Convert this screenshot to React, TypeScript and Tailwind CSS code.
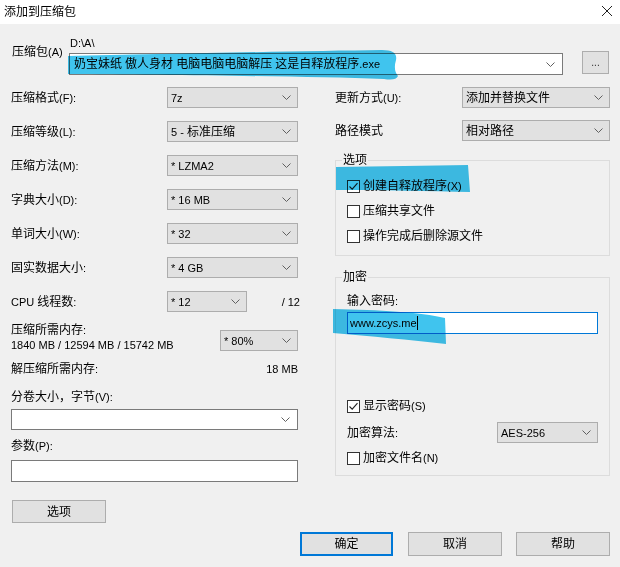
import React from "react";

const font = {
  fontFamily: '"Liberation Sans", "Noto Sans CJK SC", sans-serif',
};

// Latin runs are set a bit smaller so they keep the narrow look of the dialog font
function mix(text: string) {
  const parts = text.match(/[\u3000-\u9fff\uff00-\uffef]+|[^\u3000-\u9fff\uff00-\uffef]+/g) || [];
  return parts.map((p, i) =>
    /[\u3000-\u9fff\uff00-\uffef]/.test(p) ? (
      <span key={i}>{p}</span>
    ) : (
      <span key={i} className="text-[11px]">
        {p}
      </span>
    )
  );
}

function Chevron() {
  return (
    <svg width="9" height="5" viewBox="0 0 9 5" className="shrink-0">
      <polyline points="0.5,0.5 4.5,4.5 8.5,0.5" fill="none" stroke="#606060" strokeWidth="1" />
    </svg>
  );
}

function Select({ value, className }: { value: string; className: string }) {
  return (
    <div
      className={`flex items-center justify-between bg-[#e1e1e1] border border-[#adadad] pl-[3px] pr-[6px] ${className}`}
    >
      <span className="text-[12px] leading-[14px] text-black whitespace-nowrap">{mix(value)}</span>
      <Chevron />
    </div>
  );
}

function Check({ checked, label }: { checked?: boolean; label: string }) {
  return (
    <div className="flex items-center h-[16px] gap-[3px]">
      <div className="w-[13px] h-[13px] border border-[#333333] bg-white flex items-center justify-center">
        {checked && (
          <svg width="11" height="11" viewBox="0 0 11 11">
            <polyline points="1.5,5.5 4.2,8.2 9.5,2.2" fill="none" stroke="#222" strokeWidth="1.1" />
          </svg>
        )}
      </div>
      <span className="text-[12px] leading-[16px]">{mix(label)}</span>
    </div>
  );
}

function Btn({ label, className }: { label: string; className: string }) {
  return (
    <div
      className={`flex items-center justify-center bg-[#e1e1e1] text-[12px] leading-[14px] ${className}`}
    >
      {label}
    </div>
  );
}

function Row({ label, value }: { label: string; value: string }) {
  return (
    <div className="flex items-center h-[21px]">
      <span className="w-[156px] text-[12px] leading-[16px]">{mix(label)}</span>
      <Select value={value} className="w-[131px] h-[21px]" />
    </div>
  );
}

export default function App() {
  return (
    <div style={font} className="relative w-[620px] h-[567px] bg-[#f0f0f0] overflow-hidden text-black">
      {/* title bar */}
      <div className="h-[24px] bg-white flex items-center justify-between pl-[4px] pr-[7px]">
        <span className="text-[12px] leading-[14px] -mt-[1px]">添加到压缩包</span>
        <svg width="12" height="12" viewBox="0 0 12 12" className="-mt-[3px]">
          <path d="M1 1 L11 11 M11 1 L1 11" stroke="#222" strokeWidth="1" />
        </svg>
      </div>

      <div className="pl-[11px] pr-[10px]">
        {/* archive row */}
        <div className="flex mt-[12px]">
          <span className="w-[58px] mt-[8px] text-[12px] leading-[16px] pl-[1px]">{mix("压缩包(A)")}</span>
          <div className="flex flex-col">
            <span className="text-[11px] leading-[14px] pl-[1px]">D:\A\</span>
            <div className="flex items-start mt-[3px]">
              <div className="w-[494px] h-[22px] bg-white border border-[#7a7a7a] flex items-center justify-between pl-[4px] pr-[7px]">
                <span className="text-[12px] leading-[14px] whitespace-nowrap">
                  {mix("奶宝妹纸 傲人身材 电脑电脑电脑解压 这是自释放程序.exe")}
                </span>
                <Chevron />
              </div>
              <div className="ml-[19px] -mt-[2px] w-[27px] h-[23px] bg-[#e1e1e1] border border-[#adadad] flex items-center justify-center text-[10px] leading-[10px] text-[#333]">
                ...
              </div>
            </div>
          </div>
        </div>

        <div className="flex">
          {/* left column */}
          <div className="w-[287px] flex flex-col">
            <div className="flex flex-col gap-[13px] mt-[12px]">
              <Row label="压缩格式(F):" value="7z" />
              <Row label="压缩等级(L):" value="5 - 标准压缩" />
              <Row label="压缩方法(M):" value="* LZMA2" />
              <Row label="字典大小(D):" value="* 16 MB" />
              <Row label="单词大小(W):" value="* 32" />
              <Row label="固实数据大小:" value="* 4 GB" />
              <div className="flex items-center h-[21px]">
                <span className="w-[156px] text-[12px] leading-[16px]">{mix("CPU 线程数:")}</span>
                <Select value="* 12" className="w-[80px] h-[21px]" />
                <span className="ml-auto -mr-[2px] text-[11px] leading-[16px]">/ 12</span>
              </div>
            </div>

            <div className="flex items-start justify-between mt-[10px]">
              <div className="flex flex-col">
                <span className="text-[12px] leading-[16px]">{mix("压缩所需内存:")}</span>
                <span className="text-[11px] leading-[15px]">1840 MB / 12594 MB / 15742 MB</span>
              </div>
              <Select value="* 80%" className="w-[78px] h-[21px] mt-[8px]" />
            </div>

            <div className="flex justify-between mt-[8px] text-[12px] leading-[16px]">
              <span>{mix("解压缩所需内存:")}</span>
              <span className="text-[11px]">18 MB</span>
            </div>

            <span className="mt-[12px] text-[12px] leading-[16px]">{mix("分卷大小，字节(V):")}</span>
            <div className="mt-[4px] h-[21px] bg-white border border-[#7a7a7a] flex items-center justify-end pr-[7px]">
              <Chevron />
            </div>

            <span className="mt-[8px] text-[12px] leading-[16px]">{mix("参数(P):")}</span>
            <div className="mt-[6px] h-[22px] bg-white border border-[#7a7a7a]" />

            <Btn label="选项" className="mt-[18px] ml-[1px] w-[94px] h-[23px] border border-[#adadad]" />
          </div>

          {/* right column */}
          <div className="ml-[37px] w-[276px] flex flex-col">
            <div className="flex items-center h-[21px] mt-[12px]">
              <span className="w-[127px] text-[12px] leading-[16px]">{mix("更新方式(U):")}</span>
              <Select value="添加并替换文件" className="w-[148px] h-[21px]" />
            </div>
            <div className="flex items-center h-[21px] mt-[12px]">
              <span className="w-[127px] text-[12px] leading-[16px]">路径模式</span>
              <Select value="相对路径" className="w-[148px] h-[21px]" />
            </div>

            <fieldset className="mt-[11px] border border-[#dcdcdc] pl-[11px] pb-[11px]">
              <legend className="ml-[-5px] px-[1px] text-[12px] leading-[16px]">选项</legend>
              <div className="flex flex-col gap-[9px] mt-[10px]">
                <Check checked label="创建自释放程序(X)" />
                <Check label="压缩共享文件" />
                <Check label="操作完成后删除源文件" />
              </div>
            </fieldset>

            <fieldset className="mt-[13px] border border-[#dcdcdc] pl-[11px] pb-[9px]">
              <legend className="ml-[-5px] px-[1px] text-[12px] leading-[16px]">加密</legend>
              <span className="block mt-[8px] text-[12px] leading-[16px]">{mix("输入密码:")}</span>
              <div className="mt-[3px] w-[251px] h-[22px] bg-white border border-[#0078d7] flex items-center pl-[2px]">
                <span className="text-[11px] leading-[14px]">www.zcys.me</span>
                <span className="w-[1px] h-[14px] bg-black" />
              </div>
              <div className="mt-[64px]">
                <Check checked label="显示密码(S)" />
              </div>
              <div className="flex items-center h-[21px] mt-[8px]">
                <span className="w-[150px] text-[12px] leading-[16px]">{mix("加密算法:")}</span>
                <Select value="AES-256" className="w-[101px] h-[21px]" />
              </div>
              <div className="mt-[7px]">
                <Check label="加密文件名(N)" />
              </div>
            </fieldset>
          </div>
        </div>

        {/* bottom buttons */}
        <div className="flex justify-end mt-[9px]">
          <Btn label="确定" className="w-[93px] h-[24px] border-2 border-[#0078d7]" />
          <Btn label="取消" className="ml-[15px] w-[94px] h-[24px] border border-[#adadad]" />
          <Btn label="帮助" className="ml-[14px] w-[94px] h-[24px] border border-[#adadad]" />
        </div>
      </div>

      {/* highlighter marks drawn over the dialog */}
      <svg
        width="620"
        height="567"
        viewBox="0 0 620 567"
        className="absolute inset-0 pointer-events-none mix-blend-multiply"
      >
        <path
          d="M68,56 C160,54 300,51 382,50 Q398,50 396,60 Q393,70 398,76 Q396,81 384,79 C300,76 160,75 68,74 Z"
          fill="#40c4ee"
        />
        <path d="M336,167 C380,166 430,166 468,165 L470,192 C430,191 380,190 336,190 Z" fill="#40c4ee" />
        <path d="M333,309 C380,310 420,312 445,318 L446,344 C410,340 370,336 333,333 Z" fill="#40c4ee" />
      </svg>
    </div>
  );
}
